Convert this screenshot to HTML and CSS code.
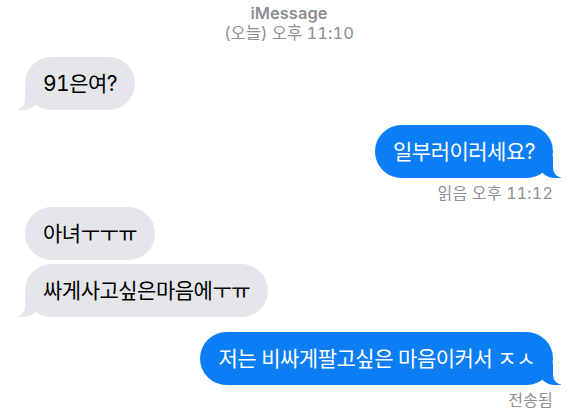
FILE: index.html
```html
<!DOCTYPE html>
<html lang="ko">
<head>
    <meta charset="UTF-8">
    <meta name="viewport" content="width=device-width, initial-scale=1.0">
    <title>iMessage</title>
    <link rel="stylesheet" href="styles.css">
</head>
<body>
    <div class="chat">
        <div class="header">
            <div class="service">iMessage</div>
            <div class="date">(오늘) 오후 11:10</div>
        </div>

        <div class="row in">
            <div class="bubble last">91은여?</div>
        </div>

        <div class="row out gap">
            <div class="bubble last">일부러이러세요?</div>
        </div>
        <div class="receipt">읽음 오후 11:12</div>

        <div class="row in">
            <div class="bubble">아녀ㅜㅜㅠ</div>
        </div>
        <div class="row in">
            <div class="bubble last">싸게사고싶은마음에ㅜㅠ</div>
        </div>

        <div class="row out gap">
            <div class="bubble last">저는 비싸게팔고싶은 마음이커서 ㅈㅅ</div>
        </div>
        <div class="receipt">전송됨</div>
    </div>
</body>
</html>
```

FILE: styles.css
```css
body {
    margin: 0;
    background-color: #fff;
    font-family: Inter, "Noto Sans CJK KR", sans-serif;
    font-variant-numeric: tabular-nums;
}

.chat {
    width: 580px;
    padding: 3px 27px 0 25px;
    box-sizing: border-box;
}

.header {
    text-align: center;
    color: #8e8e93;
    font-size: 16.5px;
    line-height: 20px;
    margin-bottom: 14px;
}

.service {
    font-weight: 600;
}

.date {
    font-size: 16.5px;
}

.row {
    display: flex;
    margin-top: 4px;
}

.row.gap {
    margin-top: 15px;
}

.row.in {
    justify-content: flex-start;
}

.row.out {
    justify-content: flex-end;
}

.bubble {
    position: relative;
    padding: 13px 18px;
    border-radius: 27px;
    font-size: 21px;
    line-height: 27px;
    letter-spacing: -0.5px;
}

.in .bubble {
    background-color: #e5e6ea;
    color: #000;
}

.out .bubble {
    background-color: #0b7df5;
    color: #fff;
}

/* tails */
.bubble.last::before,
.bubble.last::after {
    content: "";
    position: absolute;
    bottom: 0;
    height: 22px;
}

.in .bubble.last::before {
    left: -8px;
    width: 22px;
    background-color: #e5e6ea;
    border-bottom-right-radius: 16px 14px;
}

.in .bubble.last::after {
    left: -10px;
    width: 10px;
    background-color: #fff;
    border-bottom-right-radius: 10px;
}

.out .bubble.last::before {
    right: -8px;
    width: 22px;
    background-color: #0b7df5;
    border-bottom-left-radius: 16px 14px;
}

.out .bubble.last::after {
    right: -10px;
    width: 10px;
    background-color: #fff;
    border-bottom-left-radius: 10px;
}

.receipt {
    text-align: right;
    color: #8e8e93;
    font-size: 16px;
    line-height: 20px;
    margin-top: 5px;
    letter-spacing: 0.2px;
}
```
